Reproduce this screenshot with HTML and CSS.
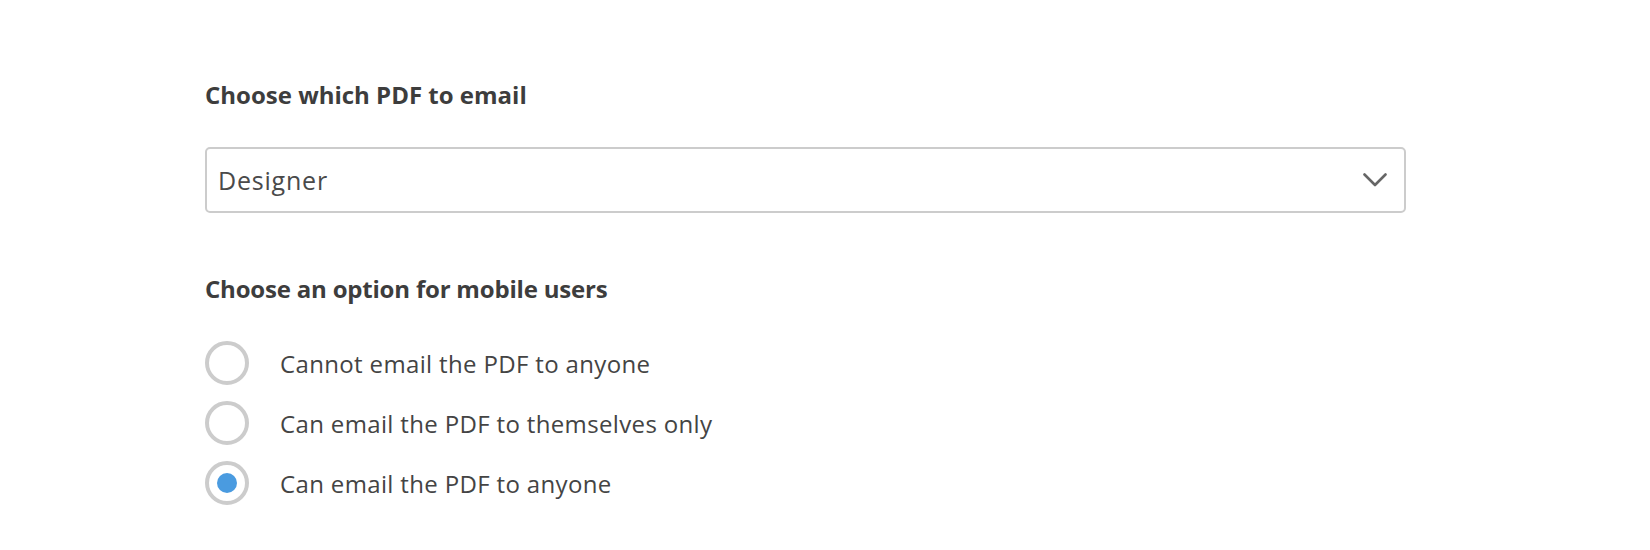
FILE: index.html
```html
<!DOCTYPE html>
<html>
<head>
<meta charset="utf-8">
<link rel="stylesheet" href="styles.css">
</head>
<body>
<div class="form">
  <h2 class="label">Choose which PDF to email</h2>
  <div class="select">
    <span class="select-value">Designer</span>
    <svg class="chevron" width="24" height="14" viewBox="0 0 24 14"><path d="M1.5 1.5 L12 12 L22.5 1.5" fill="none" stroke="#666" stroke-width="2.6" stroke-linecap="round" stroke-linejoin="round"/></svg>
  </div>
  <h2 class="label label-second">Choose an option for mobile users</h2>
  <div class="options">
    <div class="option"><span class="radio"></span><span class="option-text">Cannot email the PDF to anyone</span></div>
    <div class="option"><span class="radio"></span><span class="option-text">Can email the PDF to themselves only</span></div>
    <div class="option"><span class="radio checked"></span><span class="option-text">Can email the PDF to anyone</span></div>
  </div>
</div>
</body>
</html>
```

FILE: styles.css
```css
html, body {
  margin: 0;
  padding: 0;
  background: #ffffff;
}
body {
  font-family: "Open Sans", "Liberation Sans", sans-serif;
  color: #444444;
}
.form {
  padding: 80px 0 0 205px;
  width: 1201px;
}
.label {
  margin: 0;
  font-size: 24px;
  font-weight: 700;
  color: #3d3d3d;
  line-height: 30px;
}
.select {
  margin-top: 37px;
  box-sizing: border-box;
  height: 66px;
  width: 1201px;
  border: 2px solid #cccccc;
  border-radius: 5px;
  display: flex;
  align-items: center;
  justify-content: space-between;
  padding: 0 17px 0 11px;
}
.select-value {
  font-size: 25px;
  letter-spacing: 0.8px;
  color: #4a4a4a;
}
.chevron {
  display: block;
}
.label-second {
  margin-top: 61px;
  letter-spacing: -0.2px;
}
.options {
  margin-top: 37px;
  display: flex;
  flex-direction: column;
  gap: 16px;
}
.option {
  display: flex;
  align-items: center;
  height: 44px;
}
.radio {
  box-sizing: border-box;
  width: 44px;
  height: 44px;
  border: 4px solid #cccccc;
  border-radius: 50%;
  background: #ffffff;
  position: relative;
  flex: none;
}
.radio.checked::after {
  content: "";
  position: absolute;
  left: 8px;
  top: 8px;
  width: 20px;
  height: 20px;
  border-radius: 50%;
  background: #4a9be0;
}
.option-text {
  margin-left: 31px;
  font-size: 24px;
  letter-spacing: 0.35px;
  color: #444444;
}
```
